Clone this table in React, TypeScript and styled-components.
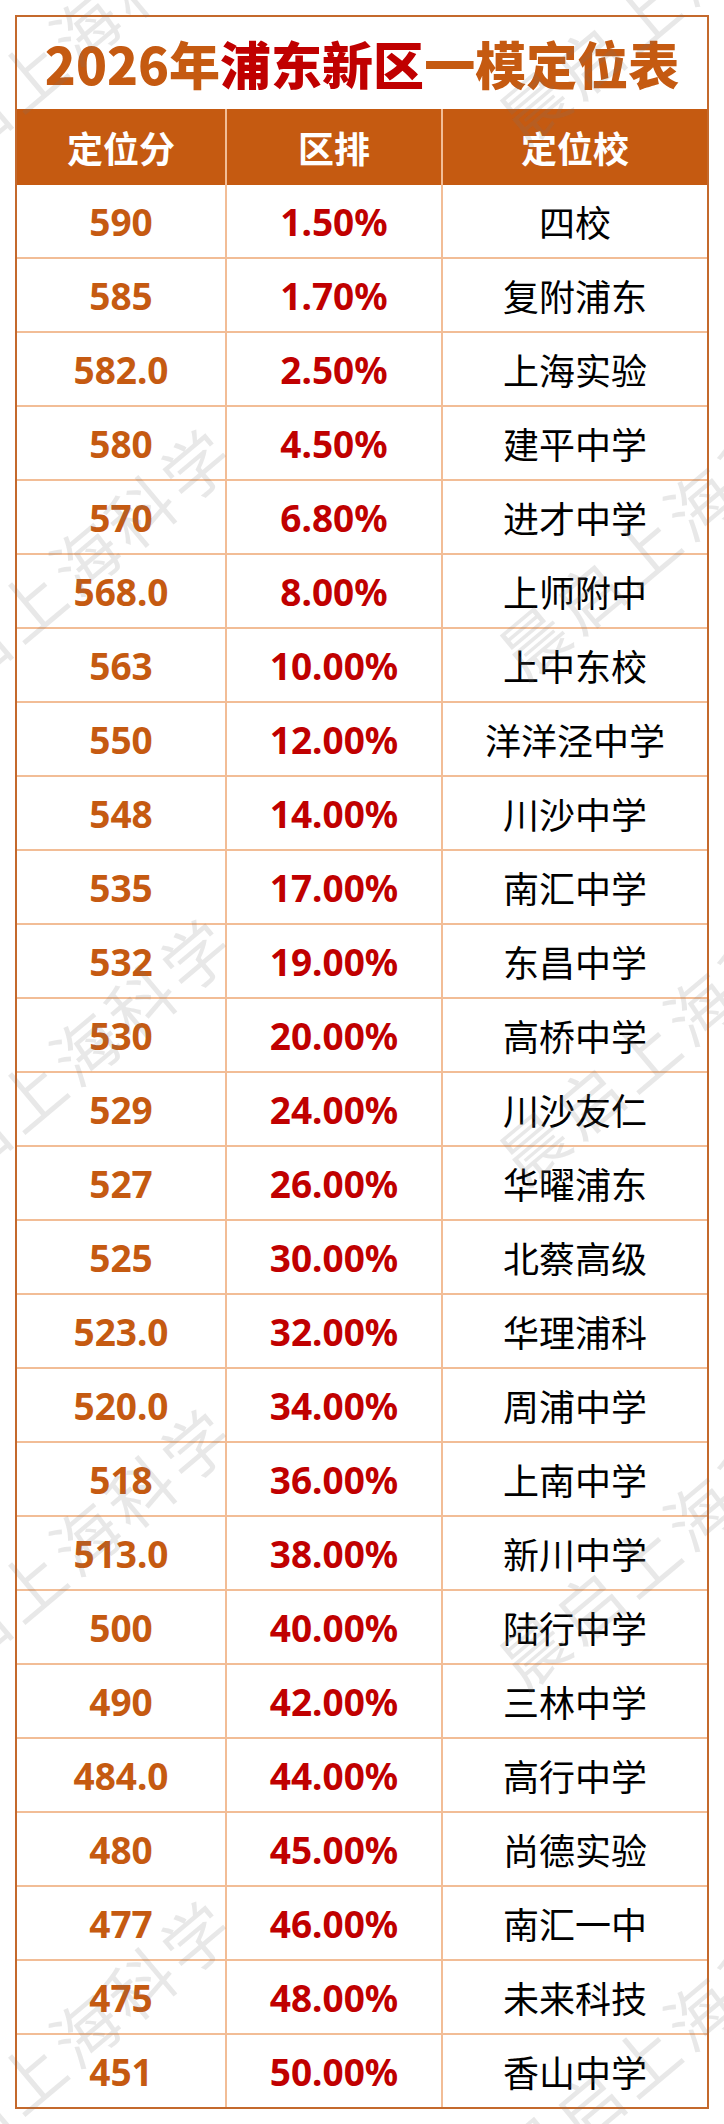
import React from "react";
import styled, { createGlobalStyle } from "styled-components";

const GlobalStyle = createGlobalStyle`
  html, body { margin: 0; padding: 0; background: #ffffff; }
  * { box-sizing: border-box; }
`;

const ORANGE = "#c55a11";
const FRAME = "#c4692c";
const LINE = "#f2bd96";
const RED = "#c00000";

const Page = styled.div`
  position: relative;
  width: 724px;
  height: 2124px;
  overflow: hidden;
  padding: 15px 15px 0 15px;
  background: #ffffff;
  font-family: "Noto Sans CJK SC", "Noto Sans", sans-serif;
`;

const Frame = styled.div`
  width: 694px;
  border: 2px solid ${FRAME};
  background: #ffffff;
`;

const Title = styled.h1`
  margin: 0;
  height: 92px;
  display: flex;
  align-items: center;
  justify-content: center;
  font-family: "Noto Sans CJK SC", sans-serif;
  font-size: 51px;
  font-weight: 900;
  color: ${ORANGE};
  letter-spacing: 0;
  line-height: 1;
`;

const Accent = styled.span`
  color: ${RED};
`;

const Grid = styled.div<{ $head?: boolean; $last?: boolean }>`
  display: grid;
  grid-template-columns: 210px 216px 1fr;
  height: ${(p) => (p.$head ? "76px" : p.$last ? "72px" : "74px")};
  background: ${(p) => (p.$head ? ORANGE : "transparent")};
  border-bottom: ${(p) => (p.$head || p.$last ? "none" : `2px solid ${LINE}`)};
`;

const Cell = styled.div<{ $end?: boolean }>`
  display: flex;
  align-items: center;
  justify-content: center;
  border-right: ${(p) => (p.$end ? "none" : `2px solid ${LINE}`)};
`;

const HeadText = styled.span`
  font-family: "Noto Sans CJK SC", sans-serif;
  font-weight: 700;
  font-size: 36px;
  color: #ffffff;
  line-height: 1;
`;

const Num = styled.span<{ $tone: "score" | "rank" }>`
  font-family: "Noto Sans", "Open Sans", sans-serif;
  font-weight: 700;
  font-size: 37px;
  line-height: 1;
  color: ${(p) => (p.$tone === "score" ? ORANGE : RED)};
`;

const School = styled.span`
  font-family: "Noto Sans CJK SC", sans-serif;
  font-weight: 400;
  font-size: 36px;
  line-height: 1;
  color: #000000;
`;

const Watermark = styled.span`
  position: absolute;
  white-space: nowrap;
  pointer-events: none;
  transform: translate(-50%, -50%) rotate(-40deg);
  font-family: "Noto Sans CJK SC", sans-serif;
  font-size: 66px;
  font-weight: 400;
  letter-spacing: 6px;
  color: rgba(120, 120, 120, 0.17);
`;

const rows: [string, string, string][] = [
  ["590", "1.50%", "四校"],
  ["585", "1.70%", "复附浦东"],
  ["582.0", "2.50%", "上海实验"],
  ["580", "4.50%", "建平中学"],
  ["570", "6.80%", "进才中学"],
  ["568.0", "8.00%", "上师附中"],
  ["563", "10.00%", "上中东校"],
  ["550", "12.00%", "洋洋泾中学"],
  ["548", "14.00%", "川沙中学"],
  ["535", "17.00%", "南汇中学"],
  ["532", "19.00%", "东昌中学"],
  ["530", "20.00%", "高桥中学"],
  ["529", "24.00%", "川沙友仁"],
  ["527", "26.00%", "华曜浦东"],
  ["525", "30.00%", "北蔡高级"],
  ["523.0", "32.00%", "华理浦科"],
  ["520.0", "34.00%", "周浦中学"],
  ["518", "36.00%", "上南中学"],
  ["513.0", "38.00%", "新川中学"],
  ["500", "40.00%", "陆行中学"],
  ["490", "42.00%", "三林中学"],
  ["484.0", "44.00%", "高行中学"],
  ["480", "45.00%", "尚德实验"],
  ["477", "46.00%", "南汇一中"],
  ["475", "48.00%", "未来科技"],
  ["451", "50.00%", "香山中学"],
];

const marks: [number, number][] = [
  [58, 47],
  [58, 577],
  [58, 1067],
  [58, 1557],
  [58, 2049],
  [672, -13],
  [672, 522],
  [672, 1027],
  [672, 1532],
  [672, 2032],
];

export default function App() {
  return (
    <Page>
      <GlobalStyle />
      <Frame>
        <Title>
          2026年<Accent>浦东新区</Accent>一模定位表
        </Title>
        <Grid $head>
          <Cell>
            <HeadText>定位分</HeadText>
          </Cell>
          <Cell>
            <HeadText>区排</HeadText>
          </Cell>
          <Cell $end>
            <HeadText>定位校</HeadText>
          </Cell>
        </Grid>
        {rows.map(([score, rank, school], i) => (
          <Grid key={school + i} $last={i === rows.length - 1}>
            <Cell>
              <Num $tone="score">{score}</Num>
            </Cell>
            <Cell>
              <Num $tone="rank">{rank}</Num>
            </Cell>
            <Cell $end>
              <School>{school}</School>
            </Cell>
          </Grid>
        ))}
      </Frame>
      {marks.map(([x, y], i) => (
        <Watermark key={i} style={{ left: x, top: y }}>
          晨启上海科学
        </Watermark>
      ))}
    </Page>
  );
}
